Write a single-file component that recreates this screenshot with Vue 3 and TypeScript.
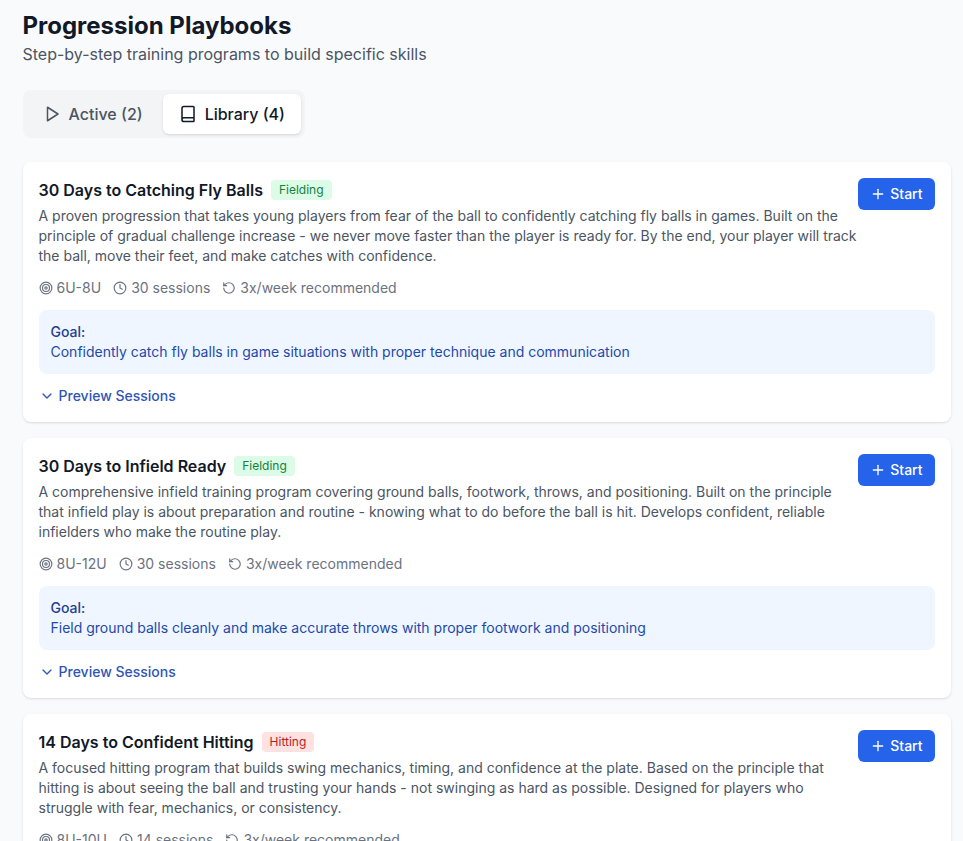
<template>
  <div class="page">
    <header class="head">
      <h1>Progression Playbooks</h1>
      <p>Step-by-step training programs to build specific skills</p>
    </header>

    <div class="tabs">
      <button class="tab">
        <svg class="tab-icon" viewBox="0 0 24 24"><polygon points="6 3 20 12 6 21 6 3" /></svg>
        Active (2)
      </button>
      <button class="tab on">
        <svg class="tab-icon" viewBox="0 0 24 24"><path d="M4 19.5v-15A2.5 2.5 0 0 1 6.5 2H19a1 1 0 0 1 1 1v18a1 1 0 0 1-1 1H6.5a1 1 0 0 1 0-5H20" /></svg>
        Library (4)
      </button>
    </div>

    <section v-for="p in playbooks" :key="p.title" class="card">
      <div class="top">
        <div class="info">
          <div class="title-row">
            <h3>{{ p.title }}</h3>
            <span class="badge" :class="p.kind">{{ p.tag }}</span>
          </div>
          <p class="desc">{{ p.desc }}</p>
        </div>
        <button class="start">
          <svg class="plus" viewBox="0 0 24 24"><path d="M5 12h14" /><path d="M12 5v14" /></svg>
          Start
        </button>
      </div>

      <div class="meta">
        <span>
          <svg viewBox="0 0 24 24"><circle cx="12" cy="12" r="10" /><circle cx="12" cy="12" r="6" /><circle cx="12" cy="12" r="2" /></svg>
          {{ p.age }}
        </span>
        <span>
          <svg viewBox="0 0 24 24"><circle cx="12" cy="12" r="10" /><polyline points="12 6 12 12 16 14" /></svg>
          {{ p.sessions }} sessions
        </span>
        <span>
          <svg viewBox="0 0 24 24"><path d="M3 12a9 9 0 1 0 9-9 9.75 9.75 0 0 0-6.74 2.74L3 8" /><path d="M3 3v5h5" /></svg>
          3x/week recommended
        </span>
      </div>

      <div class="goal">
        <div class="goal-label">Goal:</div>
        <div class="goal-text">{{ p.goal }}</div>
      </div>

      <button class="preview">
        <svg viewBox="0 0 24 24"><path d="m6 9 6 6 6-6" /></svg>
        Preview Sessions
      </button>
    </section>
  </div>
</template>

<script setup lang="ts">
interface Playbook {
  title: string;
  tag: string;
  kind: 'green' | 'red';
  desc: string;
  age: string;
  sessions: number;
  goal: string;
}

const playbooks: Playbook[] = [
  {
    title: '30 Days to Catching Fly Balls',
    tag: 'Fielding',
    kind: 'green',
    desc: 'A proven progression that takes young players from fear of the ball to confidently catching fly balls in games. Built on the principle of gradual challenge increase - we never move faster than the player is ready for. By the end, your player will track the ball, move their feet, and make catches with confidence.',
    age: '6U-8U',
    sessions: 30,
    goal: 'Confidently catch fly balls in game situations with proper technique and communication',
  },
  {
    title: '30 Days to Infield Ready',
    tag: 'Fielding',
    kind: 'green',
    desc: 'A comprehensive infield training program covering ground balls, footwork, throws, and positioning. Built on the principle that infield play is about preparation and routine - knowing what to do before the ball is hit. Develops confident, reliable infielders who make the routine play.',
    age: '8U-12U',
    sessions: 30,
    goal: 'Field ground balls cleanly and make accurate throws with proper footwork and positioning',
  },
  {
    title: '14 Days to Confident Hitting',
    tag: 'Hitting',
    kind: 'red',
    desc: 'A focused hitting program that builds swing mechanics, timing, and confidence at the plate. Based on the principle that hitting is about seeing the ball and trusting your hands - not swinging as hard as possible. Designed for players who struggle with fear, mechanics, or consistency.',
    age: '8U-10U',
    sessions: 14,
    goal: 'Make consistent hard contact with a confident, repeatable swing',
  },
];
</script>

<style>
html,
body {
  margin: 0;
  background: #f9fafb;
}
</style>

<style scoped>
.page {
  height: 841px;
  overflow: hidden;
  box-sizing: border-box;
  padding: 10px 12.5px 0 22.5px;
  background: #f9fafb;
  font-family: Inter, "Liberation Sans", sans-serif;
  color: #111827;
}

.head {
  margin-bottom: 24px;
}

h1 {
  margin: 0;
  font-size: 24px;
  line-height: 32px;
  font-weight: 700;
}

.head p {
  margin: 0;
  font-size: 16px;
  line-height: 24px;
  color: #4b5563;
}

.tabs {
  display: inline-flex;
  gap: 4px;
  padding: 4px;
  margin-bottom: 24px;
  border-radius: 8px;
  background: #f3f4f6;
  vertical-align: top;
}

.tab {
  display: flex;
  align-items: center;
  gap: 8px;
  height: 40px;
  padding: 0 16px;
  border: 0;
  border-radius: 6px;
  background: transparent;
  font: 500 16px/24px Inter, "Liberation Sans", sans-serif;
  color: #4b5563;
}

.tab.on {
  background: #fff;
  color: #111827;
  box-shadow: 0 1px 3px rgba(0, 0, 0, 0.1), 0 1px 2px -1px rgba(0, 0, 0, 0.1);
}

.tab-icon {
  width: 18px;
  height: 18px;
  fill: none;
  stroke: currentColor;
  stroke-width: 2;
  stroke-linecap: round;
  stroke-linejoin: round;
}

.card {
  padding: 16px;
  margin-bottom: 16px;
  border-radius: 8px;
  background: #fff;
  box-shadow: 0 1px 3px rgba(0, 0, 0, 0.1), 0 1px 2px -1px rgba(0, 0, 0, 0.1);
}

.top {
  display: flex;
  align-items: flex-start;
  justify-content: space-between;
}

.info {
  flex: 1;
  min-width: 0;
}

.title-row {
  display: flex;
  align-items: center;
  gap: 8px;
  margin-bottom: 4px;
}

h3 {
  margin: 0;
  font-size: 16px;
  line-height: 24px;
  font-weight: 600;
}

.badge {
  padding: 2px 8px;
  border-radius: 4px;
  font-size: 12px;
  line-height: 16px;
  font-weight: 400;
}

.badge.green {
  background: #dcfce7;
  color: #15803d;
}

.badge.red {
  background: #fee2e2;
  color: #b91c1c;
}

.desc {
  margin: 0;
  font-size: 14px;
  line-height: 20px;
  color: #4b5563;
}

.start {
  display: flex;
  align-items: center;
  gap: 4px;
  flex-shrink: 0;
  height: 32px;
  padding: 0 12px;
  border: 0;
  border-radius: 6px;
  background: #2563eb;
  color: #fff;
  font: 500 14px/20px Inter, "Liberation Sans", sans-serif;
}

.plus {
  width: 16px;
  height: 16px;
  fill: none;
  stroke: currentColor;
  stroke-width: 2;
  stroke-linecap: round;
}

.meta {
  display: flex;
  gap: 12px;
  margin-top: 12px;
  font-size: 14px;
  line-height: 20px;
  color: #6b7280;
}

.meta span {
  display: flex;
  align-items: center;
  gap: 4px;
}

.meta svg {
  width: 14px;
  height: 14px;
  fill: none;
  stroke: currentColor;
  stroke-width: 2;
  stroke-linecap: round;
  stroke-linejoin: round;
}

.goal {
  margin-top: 12px;
  padding: 12px;
  border-radius: 8px;
  background: #eff6ff;
  font-size: 14px;
  line-height: 20px;
}

.goal-label {
  font-weight: 500;
  color: #23408f;
}

.goal-text {
  color: #2349ab;
}

.preview {
  display: flex;
  align-items: center;
  gap: 4px;
  margin-top: 12px;
  padding: 0;
  border: 0;
  background: none;
  color: #2f55b5;
  font: 500 14px/20px Inter, "Liberation Sans", sans-serif;
}

.preview svg {
  width: 16px;
  height: 16px;
  fill: none;
  stroke: currentColor;
  stroke-width: 2;
  stroke-linecap: round;
  stroke-linejoin: round;
}
</style>
